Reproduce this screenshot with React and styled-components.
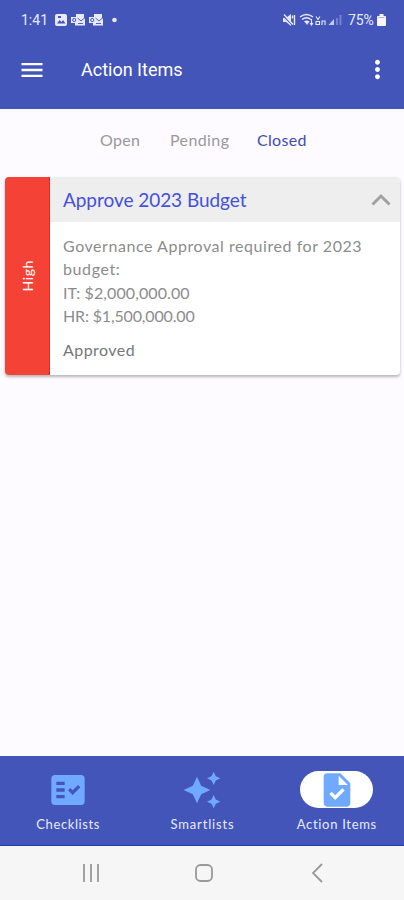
import React, { useState } from 'react';
import styled, { createGlobalStyle } from 'styled-components';
import { MdAutoAwesome, MdFactCheck, MdMenu, MdMoreVert, MdTask } from 'react-icons/md';

const GlobalStyle = createGlobalStyle`
  * {
    box-sizing: border-box;
  }

  body {
    margin: 0;
    background-color: #fdfbff;
    font-family: Lato, sans-serif;
  }

  button {
    padding: 0;
    border: none;
    background: none;
    font-family: inherit;
    cursor: pointer;
  }

  svg {
    display: block;
    flex-shrink: 0;
  }
`;

const Screen = styled.div`
  display: flex;
  flex-direction: column;
  width: 404px;
  height: 900px;
  overflow: hidden;
`;

const Header = styled.header`
  height: 109px;
  background-color: #4355b9;
  color: #fff;
`;

const StatusBar = styled.div`
  display: flex;
  align-items: center;
  height: 39px;
  padding: 0 18px 0 21px;
  font-family: Roboto, sans-serif;
  font-size: 14px;
  color: #e8eaff;
`;

const Clock = styled.span`
  width: 33px;
`;

const Battery = styled.span`
  width: 29px;
  margin-left: 2px;
  letter-spacing: -0.1px;
`;

const StatusRight = styled.div`
  display: flex;
  align-items: center;
  margin-left: auto;
`;

const Toolbar = styled.div`
  display: flex;
  align-items: center;
  height: 61px;
  padding: 0 12px 0 18px;
`;

const IconButton = styled.button`
  color: #fff;
`;

const Title = styled.h1`
  flex: 1;
  margin: -1px 0 0 35px;
  font-family: Roboto, sans-serif;
  font-size: 18px;
  font-weight: 400;
`;

const Tabs = styled.div`
  display: flex;
  align-items: center;
  height: 64px;
  padding: 0 0 3px 100px;
`;

const Tab = styled.button`
  width: ${(props) => props.$width}px;
  text-align: left;
  white-space: nowrap;
  font-size: 16px;
  letter-spacing: ${(props) => props.$spacing}px;
  color: ${(props) => (props.$active ? '#3c4db2' : '#999')};
`;

const Card = styled.article`
  display: flex;
  height: 198px;
  margin: 4px 4px 0 5px;
  border-radius: 4px;
  overflow: hidden;
  background-color: #fff;
  box-shadow: 0 2px 3px rgba(0, 0, 0, 0.28);
`;

const Priority = styled.div`
  display: flex;
  align-items: center;
  justify-content: center;
  flex-shrink: 0;
  width: 45px;
  background-color: #f44336;
  border-right: 1px solid #f5221b;
  color: #fff;

  span {
    writing-mode: vertical-rl;
    transform: rotate(180deg);
    font-size: 14px;
    letter-spacing: 0.6px;
  }
`;

const CardMain = styled.div`
  flex: 1;
`;

const CardHeader = styled.div`
  display: flex;
  align-items: center;
  justify-content: space-between;
  height: 45px;
  padding: 0 9px 0 13px;
  background-color: #eee;
`;

const CardTitle = styled.h2`
  margin: 0;
  font-size: 19px;
  font-weight: 400;
  letter-spacing: -0.05px;
  color: #4350dc;
`;

const CardBody = styled.div`
  padding: 12px 13px;
  font-size: 16px;
  line-height: 23.3px;
  color: #8c8c8c;
`;

const Line = styled.div`
  white-space: nowrap;
  letter-spacing: ${(props) => props.$spacing}px;
`;

const Result = styled.div`
  margin-top: 11px;
  letter-spacing: 0.45px;
  color: #777;
`;

const BottomNav = styled.nav`
  display: grid;
  grid-template-columns: repeat(3, 1fr);
  height: 90px;
  margin-top: auto;
  padding-left: 1px;
  background-color: #4355b9;
  border-bottom: 1px solid #1d3eb5;
`;

const NavItem = styled.button`
  display: flex;
  flex-direction: column;
  align-items: center;
  padding-top: 15px;
  color: #e6ebff;
  font-size: 13px;
  letter-spacing: ${(props) => props.$spacing}px;
`;

const NavIcon = styled.span`
  display: flex;
  align-items: center;
  justify-content: center;
  width: 73px;
  height: 37px;
  margin-bottom: 8px;
  border-radius: 19px;
  background-color: ${(props) => (props.$active ? '#fff' : 'transparent')};
  color: #70aaff;
`;

const SystemBar = styled.div`
  display: grid;
  grid-template-columns: 114px 117px 14px;
  align-items: center;
  height: 54px;
  padding: 0 0 1px 80px;
  background-color: #f6f6f6;
`;

const NotificationIcons = () => (
  <svg width="66" height="14" viewBox="0 0 66 14" fill="#e8eaff">
    <rect x="1" y="1" width="12" height="12" rx="2" />
    <path d="M3 10.5 5.5 7l2 2 1.5-2 2.5 3.5zM4 3h3v2H4z" fill="#4355b9" />
    {[17, 35].map((x) => (
      <g key={x} transform={`translate(${x} 0)`}>
        <path d="M5 1h8v4l1 1v6.5H4V10H0V4h5z" />
        <circle cx="3.2" cy="7" r="1.6" fill="none" stroke="#4355b9" />
        <path d="m6.500 5 3.500 3 3.500-3M7 10.5h5" fill="none" stroke="#4355b9" strokeWidth="0.9" />
      </g>
    ))}
    <circle cx="60.500" cy="7" r="2.300" />
  </svg>
);

const SignalIcons = () => (
  <svg width="64" height="16" viewBox="0 0 64 16" fill="none" stroke="#e8eaff" strokeWidth="1.4">
    <path d="M1 6h3l5-4v12l-5-4H1z" fill="#e8eaff" stroke="none" />
    <path d="m1 3.500 9.500 9.500" stroke="#4355b9" />
    <path d="m2 2.5 9 10M10.5 3.5v3M12.5 3v10" />
    <path d="M18 5q6.5-5 13 0M20 7.5q4.500-3.500 9 0M22.500 10q2-1.500 4.500 0" />
    <path d="m22.500 9 2.500 4 2.500-4z" fill="#e8eaff" stroke="none" />
    <path d="M29.500 7v6m-1.500-2 1.500 2 1.500-2M34 4.500l2 3 2-3M34 9.500h3.500v3H34zM40 13V9h3v4" strokeWidth="1.1" />
    <path d="M46.500 13 52 7v6z" fill="#c5ccf2" stroke="none" />
    <path d="M55 13V6M58.500 13V3" stroke="#7382d1" strokeWidth="2" />
  </svg>
);

const BatteryIcon = () => (
  <svg width="9" height="12" viewBox="0 0 9 12" fill="#f5f6ff">
    <path d="M2.500 0h4v2H8q1 0 1 1v8q0 1-1 1H1q-1 0-1-1V3q0-1 1-1h1.500z" />
    <path d="M1.500 3h6v1h-6z" fill="#aab4e8" />
  </svg>
);

const ChevronUp = () => (
  <svg width="20" height="14" viewBox="0 0 20 14" fill="none" stroke="#a1a1a1" strokeWidth="3">
    <path d="m1.500 11.500 8.500-8.500 8.500 8.500" />
  </svg>
);

const tabs = [
  { name: 'Open', width: 70, spacing: 0.3 },
  { name: 'Pending', width: 87, spacing: 0.4 },
  { name: 'Closed', width: 60, spacing: 0.3 },
];

const navItems = [
  { name: 'Checklists', icon: MdFactCheck, spacing: 0.6 },
  { name: 'Smartlists', icon: MdAutoAwesome, spacing: 0.85 },
  { name: 'Action Items', icon: MdTask, spacing: 0.7 },
];

function App() {
  const [tab, setTab] = useState('Closed');
  const [page, setPage] = useState('Action Items');
  const [open, setOpen] = useState(true);

  return (
    <Screen>
      <GlobalStyle />
      <Header>
        <StatusBar>
          <Clock>1:41</Clock>
          <NotificationIcons />
          <StatusRight>
            <SignalIcons />
            <Battery>75%</Battery>
            <BatteryIcon />
          </StatusRight>
        </StatusBar>
        <Toolbar>
          <IconButton aria-label="Menu"><MdMenu size={28} /></IconButton>
          <Title>Action Items</Title>
          <IconButton aria-label="More"><MdMoreVert size={29} /></IconButton>
        </Toolbar>
      </Header>

      <Tabs>
        {tabs.map(({ name, width, spacing }) => (
          <Tab key={name} $width={width} $spacing={spacing} $active={tab === name} onClick={() => setTab(name)}>
            {name}
          </Tab>
        ))}
      </Tabs>

      <Card>
        <Priority><span>High</span></Priority>
        <CardMain>
          <CardHeader>
            <CardTitle>Approve 2023 Budget</CardTitle>
            <IconButton aria-label="Toggle details" onClick={() => setOpen(!open)}>
              <ChevronUp />
            </IconButton>
          </CardHeader>
          {open && (
            <CardBody>
              <Line $spacing={0.55}>Governance Approval required for 2023</Line>
              <Line $spacing={0.6}>budget:</Line>
              <Line $spacing={0.1}>IT: $2,000,000.00</Line>
              <Line $spacing={-0.15}>HR: $1,500,000.00</Line>
              <Result>Approved</Result>
            </CardBody>
          )}
        </CardMain>
      </Card>

      <BottomNav>
        {navItems.map(({ name, icon: Icon, spacing }) => (
          <NavItem key={name} $spacing={spacing} onClick={() => setPage(name)}>
            <NavIcon $active={page === name}><Icon size={40} /></NavIcon>
            {name}
          </NavItem>
        ))}
      </BottomNav>

      <SystemBar>
        <svg width="22" height="20" viewBox="0 0 22 20" stroke="#999" strokeWidth="1.8">
          <path d="M4 1v18M11 1v18M18 1v18" />
        </svg>
        <svg width="20" height="20" viewBox="0 0 20 20" fill="none" stroke="#999" strokeWidth="1.8">
          <rect x="2" y="2" width="16" height="16" rx="4.500" />
        </svg>
        <svg width="14" height="20" viewBox="0 0 14 20" fill="none" stroke="#999" strokeWidth="1.8">
          <path d="m11 1-9 9 9 9" />
        </svg>
      </SystemBar>
    </Screen>
  );
}

export default App;
